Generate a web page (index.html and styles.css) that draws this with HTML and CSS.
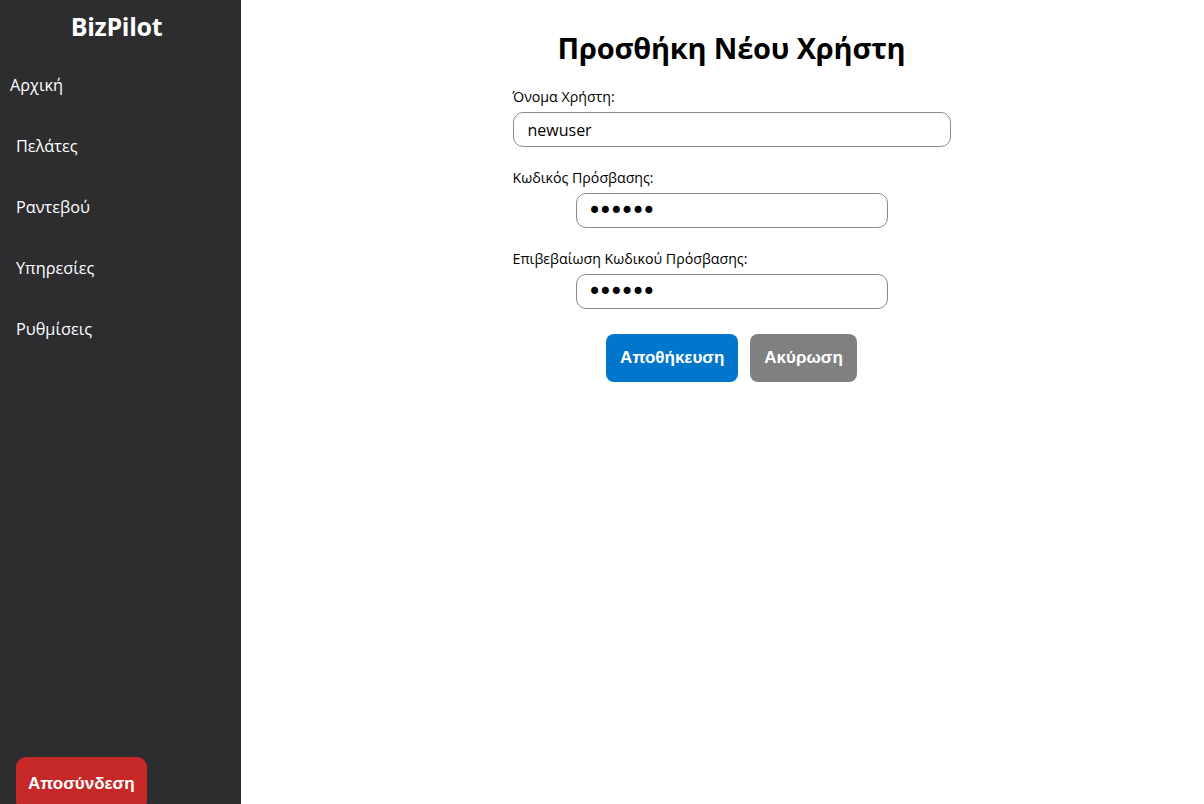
FILE: index.html
```html
<!DOCTYPE html>
<html lang="el">
<head>
<meta charset="utf-8">
<title>BizPilot</title>
<link rel="stylesheet" href="styles.css">
</head>
<body>
<div class="app">
  <aside class="sidebar">
    <div class="brand">BizPilot</div>
    <nav class="nav">
      <a class="nav-item first" href="#">Αρχική</a>
      <a class="nav-item" href="#">Πελάτες</a>
      <a class="nav-item" href="#">Ραντεβού</a>
      <a class="nav-item" href="#">Υπηρεσίες</a>
      <a class="nav-item" href="#">Ρυθμίσεις</a>
    </nav>
    <div class="spacer"></div>
    <button class="logout">Αποσύνδεση</button>
  </aside>
  <main class="main">
    <h1 class="title">Προσθήκη Νέου Χρήστη</h1>
    <form class="form">
      <label class="label">Όνομα Χρήστη:</label>
      <input class="field wide" type="text" value="newuser">
      <label class="label">Κωδικός Πρόσβασης:</label>
      <div class="center-row"><input class="field narrow" type="password" value="123456"></div>
      <label class="label">Επιβεβαίωση Κωδικού Πρόσβασης:</label>
      <div class="center-row"><input class="field narrow" type="password" value="123456" autofocus></div>
      <div class="actions">
        <button type="button" class="btn save">Αποθήκευση</button>
        <button type="button" class="btn cancel">Ακύρωση</button>
      </div>
    </form>
  </main>
</div>
</body>
</html>
```
FILE: styles.css
```css
* { box-sizing: border-box; }
html, body { margin: 0; padding: 0; height: 100%; }
body { font-family: "Open Sans", "Noto Sans", sans-serif; color: #000; background: #fff; }
.app { display: flex; height: 804px; }
.sidebar {
  width: 241px; flex: none; background: #2d2d30; color: #fff;
  display: flex; flex-direction: column; padding: 10px 0 0 0;
}
.brand { text-align: center; font-weight: 700; font-size: 25px; line-height: 32px; letter-spacing: -0.3px; margin-left: -8px; }
.nav { display: flex; flex-direction: column; margin-top: 31px; }
.nav-item { color: #fff; text-decoration: none; font-size: 16.3px; line-height: 24px; height: 61px; padding-left: 16px; }
.nav-item.first { padding-left: 10px; }
.spacer { flex: 1; }
.logout {
  align-self: flex-start; margin-left: 16px; margin-bottom: -6px;
  background: #c62828; color: #fff; border: none; border-radius: 10px;
  font-family: "Liberation Sans", Arial, sans-serif; font-weight: 700; font-size: 17px;
  padding: 0 12px; height: 53px; line-height: 49px;
}
.main { flex: 1; padding: 0 0 0 18px; display: flex; flex-direction: column; align-items: center; }
.title { font-size: 29px; font-weight: 700; margin: 27px 0 19px; line-height: 42px; letter-spacing: -0.2px; }
.form { width: 438px; display: flex; flex-direction: column; }
.label { font-size: 14.2px; line-height: 18px; margin-bottom: 6px; }
.field {
  height: 35px; border: 1px solid #8a8a8a; border-radius: 10px; background: #fff;
  font-family: "Open Sans", sans-serif; font-size: 16px; padding: 0 14px; color: #000;
  margin-bottom: 22px; outline: none;
}
.field[type="password"] { font-family: "DejaVu Sans", sans-serif; font-size: 24px; letter-spacing: -3.3px; padding-left: 11px; caret-color: #000; }
.wide { width: 100%; }
.center-row { display: flex; justify-content: center; }
.narrow { width: 312px; }
.actions { display: flex; justify-content: center; gap: 12px; margin-top: 3px; }
.btn {
  height: 48px; border: none; border-radius: 8px; color: #fff;
  font-family: "Liberation Sans", Arial, sans-serif; font-weight: 700; font-size: 17px; padding: 0 14px;
}
.save { background: #0077cc; }
.cancel { background: #808080; }
```
